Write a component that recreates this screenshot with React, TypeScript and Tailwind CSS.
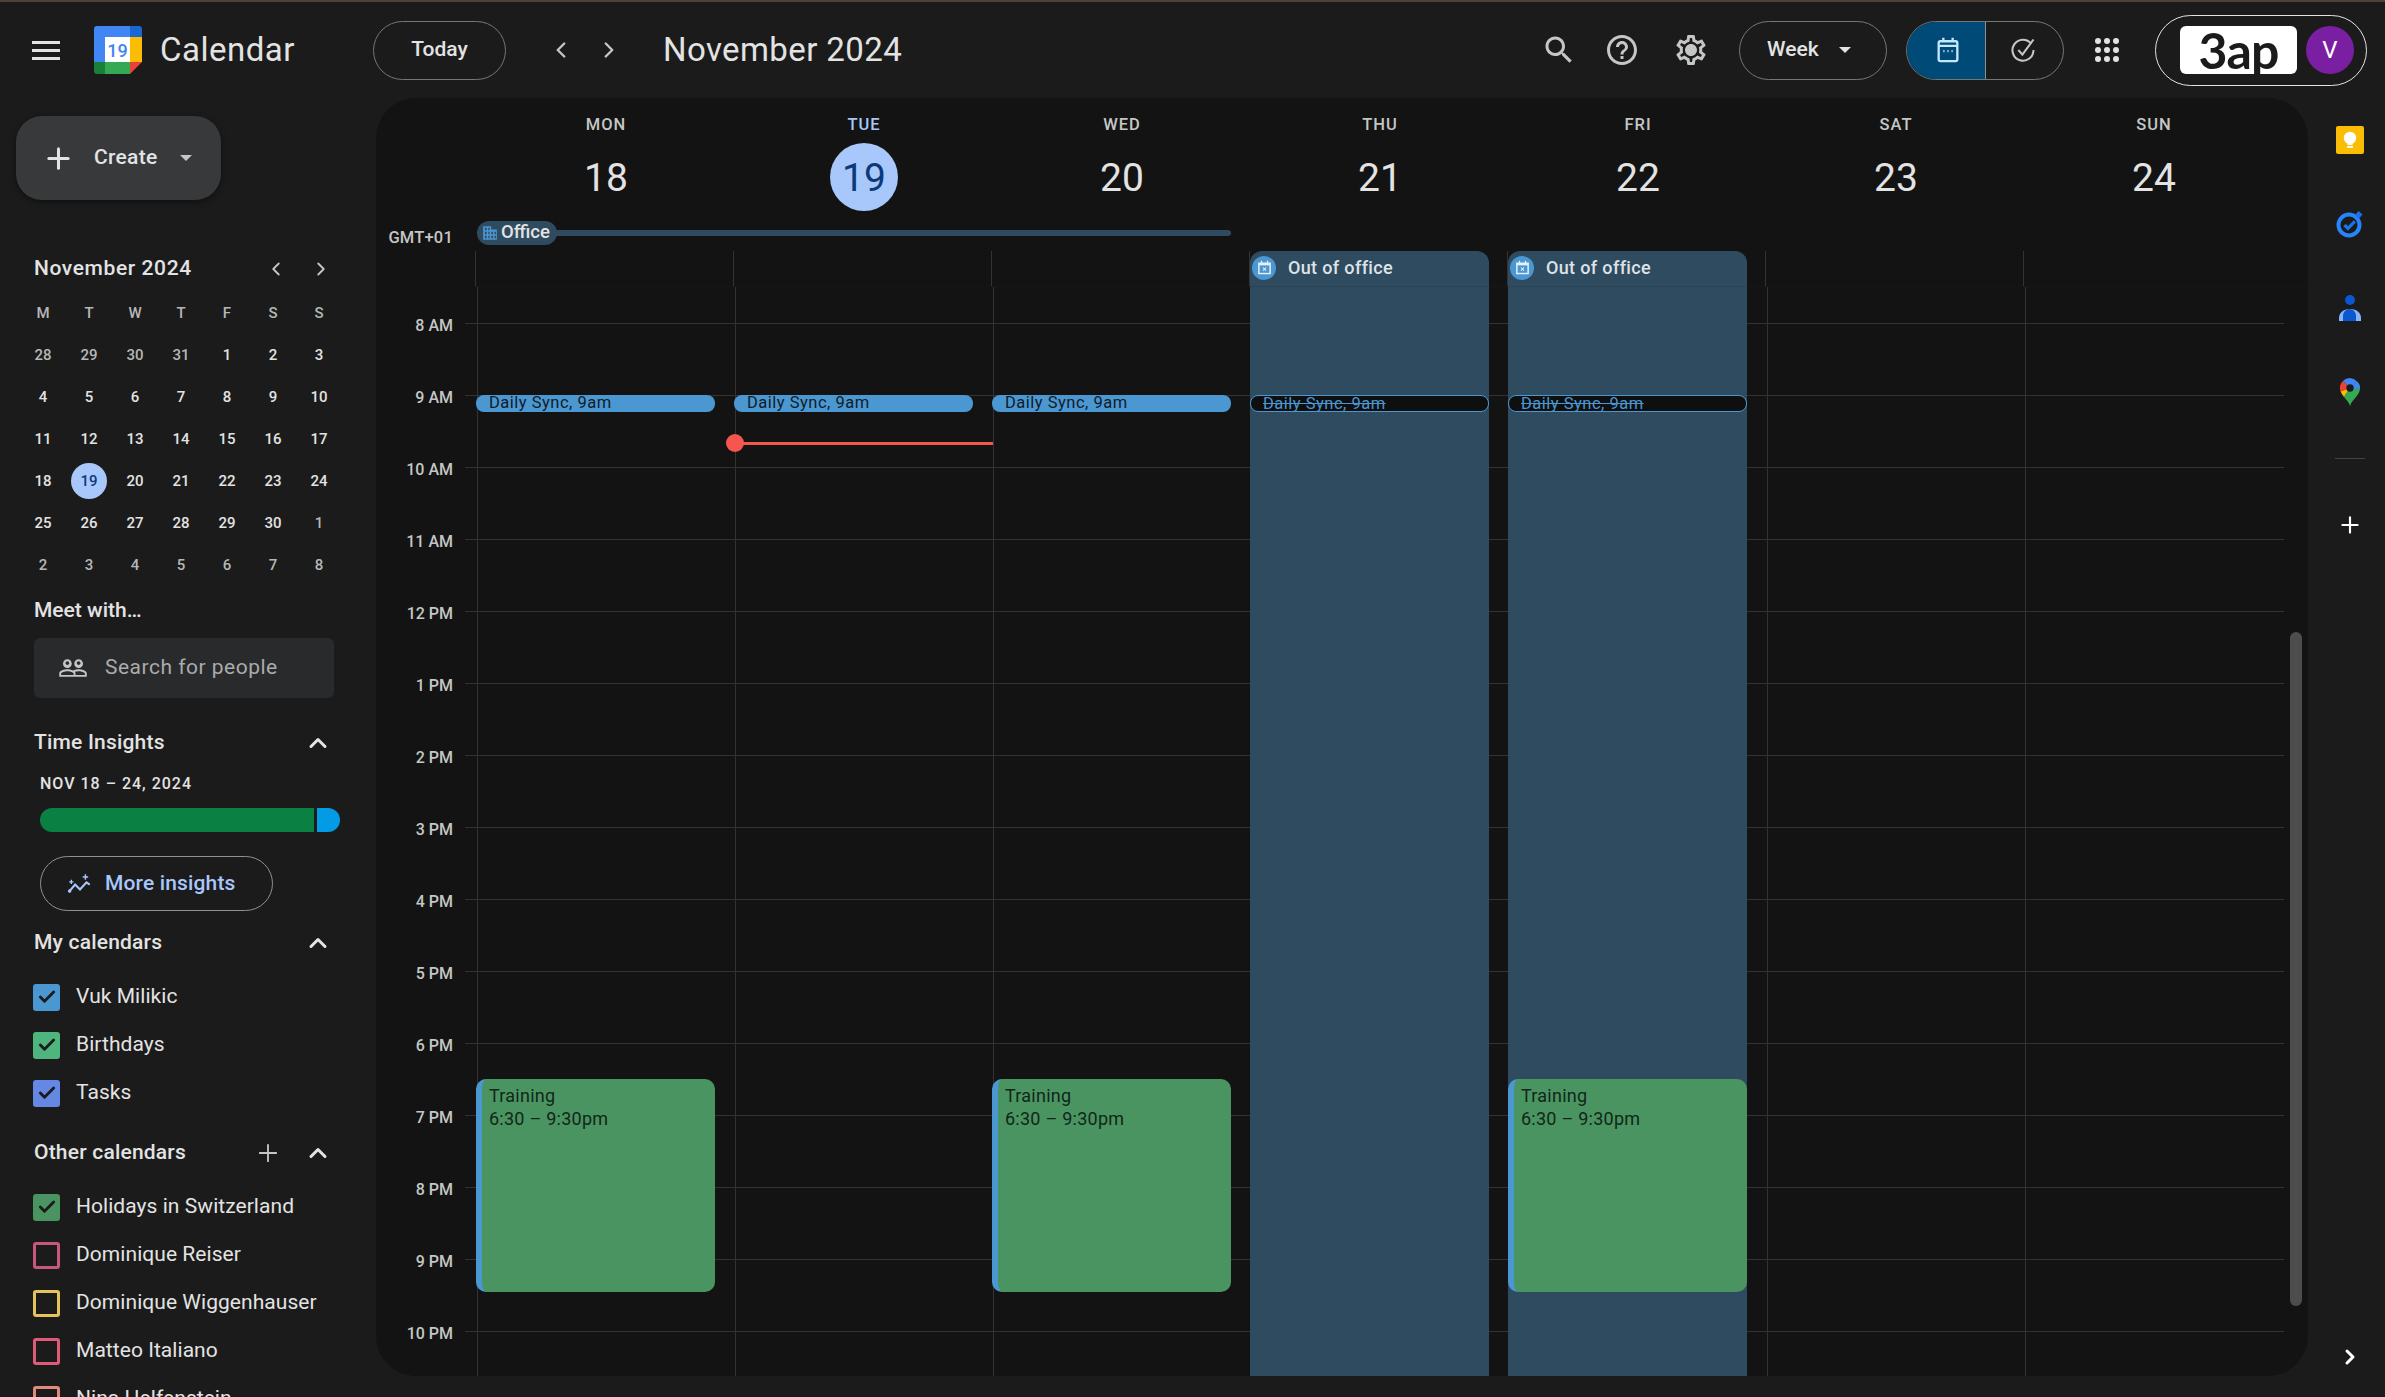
import { Check, ChevronLeft, ChevronRight, ChevronUp, Plus } from 'lucide-react'

// ============================================
// DATA
// ============================================

const weekDays = [
  { label: 'MON', date: '18' },
  { label: 'TUE', date: '19', today: true },
  { label: 'WED', date: '20' },
  { label: 'THU', date: '21' },
  { label: 'FRI', date: '22' },
  { label: 'SAT', date: '23' },
  { label: 'SUN', date: '24' },
]

const hours = ['8 AM', '9 AM', '10 AM', '11 AM', '12 PM', '1 PM', '2 PM', '3 PM', '4 PM', '5 PM', '6 PM', '7 PM', '8 PM', '9 PM', '10 PM']

const miniDays = [
  ['28', '29', '30', '31', '1', '2', '3'],
  ['4', '5', '6', '7', '8', '9', '10'],
  ['11', '12', '13', '14', '15', '16', '17'],
  ['18', '19', '20', '21', '22', '23', '24'],
  ['25', '26', '27', '28', '29', '30', '1'],
  ['2', '3', '4', '5', '6', '7', '8'],
]

const myCalendars = [
  { name: 'Vuk Milikic', box: 'bg-[#4b97d2] border-[#4b97d2]', checked: true },
  { name: 'Birthdays', box: 'bg-[#4fb57f] border-[#4fb57f]', checked: true },
  { name: 'Tasks', box: 'bg-[#6488e4] border-[#6488e4]', checked: true },
]

const otherCalendars = [
  { name: 'Holidays in Switzerland', box: 'bg-[#4a9461] border-[#4a9461]', checked: true },
  { name: 'Dominique Reiser', box: 'border-[#c9567f]', checked: false },
  { name: 'Dominique Wiggenhauser', box: 'border-[#e4c25c]', checked: false },
  { name: 'Matteo Italiano', box: 'border-[#e05a77]', checked: false },
  { name: 'Nina Helfenstein', box: 'border-[#e08a7c]', checked: false },
]

// ============================================
// ICONS
// ============================================

function MaterialIcon({ d, className }: { d: string; className?: string }) {
  return (
    <svg viewBox="0 0 24 24" fill="currentColor" className={className}>
      <path d={d} />
    </svg>
  )
}

const searchPath = 'M15.5 14h-.79l-.28-.27C15.41 12.59 16 11.11 16 9.5 16 5.91 13.09 3 9.5 3S3 5.91 3 9.5 5.91 16 9.5 16c1.61 0 3.09-.59 4.23-1.57l.27.28v.79l5 4.99L20.49 19l-4.99-5zm-6 0C7.01 14 5 11.99 5 9.5S7.01 5 9.5 5 14 7.01 14 9.5 11.99 14 9.5 14z'
const helpPath = 'M11 18h2v-2h-2v2zm1-16C6.48 2 2 6.48 2 12s4.48 10 10 10 10-4.48 10-10S17.52 2 12 2zm0 18c-4.41 0-8-3.59-8-8s3.59-8 8-8 8 3.59 8 8-3.59 8-8 8zm0-14c-2.21 0-4 1.79-4 4h2c0-1.1.9-2 2-2s2 .9 2 2c0 2-3 1.75-3 5h2c0-2.25 3-2.5 3-5 0-2.21-1.79-4-4-4z'
const gearPath = 'M19.43 12.98c.04-.32.07-.64.07-.98 0-.34-.03-.66-.07-.98l2.11-1.65c.19-.15.24-.42.12-.64l-2-3.46c-.09-.16-.26-.25-.44-.25-.06 0-.12.01-.17.03l-2.49 1c-.52-.4-1.08-.73-1.69-.98l-.38-2.65C14.46 2.18 14.25 2 14 2h-4c-.25 0-.46.18-.49.42l-.38 2.65c-.61.25-1.17.59-1.69.98l-2.49-1c-.06-.02-.12-.03-.18-.03-.17 0-.34.09-.43.25l-2 3.46c-.13.22-.07.49.12.64l2.11 1.65c-.04.32-.07.65-.07.98 0 .33.03.66.07.98l-2.11 1.65c-.19.15-.24.42-.12.64l2 3.46c.09.16.26.25.44.25.06 0 .12-.01.17-.03l2.49-1c.52.4 1.08.73 1.69.98l.38 2.65c.03.24.24.42.49.42h4c.25 0 .46-.18.49-.42l.38-2.65c.61-.25 1.17-.59 1.69-.98l2.49 1c.06.02.12.03.18.03.17 0 .34-.09.43-.25l2-3.46c.12-.22.07-.49-.12-.64l-2.11-1.65zm-1.98-1.71c.04.31.05.52.05.73 0 .21-.02.43-.05.73l-.14 1.13.89.7 1.08.84-.7 1.21-1.27-.51-1.04-.42-.9.68c-.43.32-.84.56-1.25.73l-1.06.43-.16 1.13-.2 1.35h-1.4l-.19-1.35-.16-1.13-1.06-.43c-.43-.18-.83-.41-1.23-.71l-.91-.7-1.06.43-1.27.51-.7-1.21 1.08-.84.89-.7-.14-1.13c-.03-.31-.05-.54-.05-.74s.02-.43.05-.73l.14-1.13-.89-.7-1.08-.84.7-1.21 1.27.51 1.04.42.9-.68c.43-.32.84-.56 1.25-.73l1.06-.43.16-1.13.2-1.35h1.39l.19 1.35.16 1.13 1.06.43c.43.18.83.41 1.23.71l.91.7 1.06-.43 1.27-.51.7 1.21-1.07.85-.89.7.14 1.13zM12 8c-2.21 0-4 1.79-4 4s1.79 4 4 4 4-1.79 4-4-1.79-4-4-4z'
const peoplePath = 'M16.5 13c-1.2 0-3.07.34-4.5 1-1.43-.67-3.3-1-4.5-1C5.33 13 1 14.08 1 16.25V19h22v-2.75c0-2.17-4.33-3.25-6.5-3.25zm-4 4.5h-10v-1.25c0-.54 2.56-1.75 5-1.75s5 1.21 5 1.75v1.25zm9 0H14v-1.25c0-.46-.2-.86-.52-1.22.88-.3 1.96-.53 3.02-.53 2.44 0 5 1.21 5 1.75v1.25zM7.5 12c1.93 0 3.5-1.57 3.5-3.5S9.43 5 7.5 5 4 6.57 4 8.5 5.57 12 7.5 12zm0-5.5c.83 0 1.5.67 1.5 1.5s-.67 1.5-1.5 1.5S6 8.83 6 8s.67-1.5 1.5-1.5zm9 5.5c1.93 0 3.5-1.57 3.5-3.5S18.43 5 16.5 5 13 6.57 13 8.5s1.57 3.5 3.5 3.5zm0-5.5c.83 0 1.5.67 1.5 1.5s-.67 1.5-1.5 1.5S15 8.83 15 8s.67-1.5 1.5-1.5z'

function CalendarLogo() {
  return (
    <svg viewBox="0 0 48 48" className="w-[48px] h-[48px] shrink-0">
      <path d="M3 0h33v11H11v25H0V3a3 3 0 0 1 3-3z" fill="#4285f4" />
      <path d="M36 0h9a3 3 0 0 1 3 3v8H36z" fill="#1967d2" />
      <rect x="11" y="11" width="25" height="25" fill="#fff" />
      <rect x="36" y="11" width="12" height="25" fill="#fbbc04" />
      <rect x="11" y="36" width="25" height="12" fill="#34a853" />
      <path d="M0 36h11v12H3a3 3 0 0 1-3-3z" fill="#188038" />
      <path d="M36 36h12L36 48z" fill="#ea4335" />
      <text x="23.5" y="31" textAnchor="middle" fontSize="18" fontFamily="Roboto, sans-serif" fontWeight="500" fill="#4285f4">19</text>
    </svg>
  )
}

function OfficeIcon({ className }: { className?: string }) {
  return (
    <svg viewBox="0 0 14 14" className={className} fill="#4b97d2">
      <path d="M1 1h7v3h5v9H1zm1.500 1.500v2h1.600v-2zm3 0v2h1.200v-2zm-3 3.500v2h1.600V6zm3 0v2h1.200V6zm2.700 0v2h1.500V6zm2.800 0v2h1.300V6zm-8.500 3.500v2h1.600v-2zm3 0v2h1.200v-2zm2.700 0v2h1.500v-2zm2.800 0v2h1.300v-2z" fillRule="evenodd" />
    </svg>
  )
}

function OutOfOfficeBadge() {
  return (
    <span className="flex items-center justify-center w-[24px] h-[24px] rounded-full bg-[#4b97d2] shrink-0">
      <svg viewBox="0 0 16 16" className="w-[17px] h-[17px]">
        <path d="M2 3.200h2.600V1.600h1.200v1.600h4.400V1.600h1.200v1.600H14v11.200H2z" fill="#e6f0f8" />
        <rect x="3.400" y="6" width="9.200" height="7" fill="#4b97d2" />
        <path d="M6.600 8l2.800 3M9.400 8l-2.800 3" stroke="#e6f0f8" strokeWidth="1" />
      </svg>
    </span>
  )
}

function KeepIcon() {
  return (
    <svg viewBox="0 0 28 28" className="w-[28px] h-[28px]">
      <rect width="28" height="28" rx="2" fill="#fbbc04" />
      <circle cx="14" cy="12" r="6.200" fill="#fff" />
      <rect x="11.500" y="16" width="5" height="3" fill="#fff" />
      <rect x="11" y="20" width="6" height="1.800" fill="#fff" />
    </svg>
  )
}

function TasksIcon() {
  return (
    <svg viewBox="0 0 28 28" className="w-[28px] h-[28px]">
      <circle cx="13" cy="15" r="10.500" fill="none" stroke="#2684fc" strokeWidth="4" />
      <path d="M8.500 15l3.400 3.400 7-7" fill="none" stroke="#1a73e8" strokeWidth="3.200" />
      <path d="M22.500 1l4 3.500-3.500 4-4-3.500z" fill="#1a73e8" />
    </svg>
  )
}

function ContactsIcon() {
  return (
    <svg viewBox="0 0 24 28" className="w-[24px] h-[28px]">
      <circle cx="12" cy="6" r="5" fill="#0b57d0" />
      <path d="M1 27v-3c0-5 4-9 11-9s11 4 11 9v3z" fill="#8ab4f8" />
      <path d="M5 27v-5c0-4 3-7 6.500-7s6.500 3 6.500 7v5z" fill="#0b57d0" />
    </svg>
  )
}

function MapsIcon() {
  return (
    <svg viewBox="0 0 20 28" className="w-[20px] h-[28px]">
      <path d="M10 0a10 10 0 0 0-7.200 3l7.200 7 7-6.500A10 10 0 0 0 10 0z" fill="#4285f4" />
      <path d="M2.800 3A10 10 0 0 0 .6 13.500L10 10z" fill="#ea4335" />
      <path d="M.6 13.500c.8 2 2 3.800 3.400 5.500L10 10z" fill="#fbbc04" />
      <path d="M17 3.500L10 10 4 19c2.500 3 5 5.500 6 9 1-3.500 3.500-6 6-9 2-2.500 4-5 4-9 0-2.500-1-4.700-3-6.500z" fill="#34a853" />
      <path d="M17 3.500L10 10l6.500 1.500 3.500-2c-.200-2.300-1.300-4.300-3-6z" fill="#4285f4" />
      <circle cx="10" cy="10" r="3.700" fill="#1b1b1b" />
    </svg>
  )
}

function Caret({ className }: { className?: string }) {
  return <span className={`w-0 h-0 border-x-[6px] border-x-transparent border-t-[6px] ${className ?? ''}`} />
}

// ============================================
// SIDEBAR
// ============================================

function CalendarRow({ name, box, checked }: { name: string; box: string; checked: boolean }) {
  return (
    <div className="flex items-center h-[48px] pl-[33px]">
      <span className={`flex items-center justify-center w-[27px] h-[27px] rounded-[3px] border-[3px] shrink-0 ${box}`}>
        {checked && <Check className="w-[20px] h-[20px] text-[#1b1b1b]" strokeWidth={3.4} />}
      </span>
      <span className="ml-[16px] text-[21px] tracking-[0.05px] text-[#e3e3e3] whitespace-nowrap">{name}</span>
    </div>
  )
}

function SectionHeader({ title, withPlus }: { title: string; withPlus?: boolean }) {
  return (
    <div className="flex items-center h-[36px] pl-[34px] pr-[44px]">
      <span className="text-[21px] font-medium text-[#e3e3e3] tracking-[0.2px]">{title}</span>
      {withPlus && <Plus className="w-[28px] h-[28px] ml-auto mr-[22px] text-[#c4c7c5]" strokeWidth={1.6} />}
      <ChevronUp className={`w-[28px] h-[28px] text-[#e3e3e3] ${withPlus ? '' : 'ml-auto'}`} strokeWidth={2.6} />
    </div>
  )
}

function Sidebar() {
  return (
    <aside className="w-[376px] shrink-0 overflow-hidden">
      <button className="flex items-center mt-[18px] ml-[16px] w-[205px] h-[84px] rounded-[26px] bg-[#37393b] shadow-[0_2px_6px_rgba(0,0,0,0.45)] pl-[26px]">
        <Plus className="w-[33px] h-[33px] text-[#e3e3e3]" strokeWidth={2.2} />
        <span className="ml-[19px] text-[21px] font-medium tracking-[0.3px] text-[#e3e3e3]">Create</span>
        <Caret className="ml-[22px] border-t-[#c4c7c5]" />
      </button>

      <div className="flex items-center h-[36px] mt-[51px] pl-[34px]">
        <span className="text-[21px] font-medium tracking-[0.6px] text-[#e3e3e3]">November 2024</span>
        <ChevronLeft className="w-[22px] h-[22px] ml-auto text-[#c4c7c5]" strokeWidth={2} />
        <ChevronRight className="w-[22px] h-[22px] ml-[23px] mr-[44px] text-[#c4c7c5]" strokeWidth={2} />
      </div>

      <div className="grid grid-cols-[repeat(7,46px)] auto-rows-[42px] mt-[5px] ml-[20px] text-[15px] font-medium text-center">
        {['M', 'T', 'W', 'T', 'F', 'S', 'S'].map((d, i) => (
          <span key={i} className="flex items-center justify-center text-[#b5b8b6]">{d}</span>
        ))}
        {miniDays.flatMap((week, r) =>
          week.map((d, c) => {
            const muted = r === 0 ? c < 4 : r >= 4 && (r === 5 || c === 6)
            const today = d === '19'
            return (
              <span key={`${r}-${c}`} className="flex items-center justify-center">
                <span className={`flex items-center justify-center w-[36px] h-[36px] rounded-full ${today ? 'bg-[#a8c7fa] text-[#0b3a7a]' : muted ? 'text-[#b5b8b6]' : 'text-[#e3e3e3]'}`}>
                  {d}
                </span>
              </span>
            )
          })
        )}
      </div>

      <div className="h-[24px] mt-[13px] ml-[34px] flex items-center text-[21px] font-medium text-[#e3e3e3]">Meet with…</div>
      <div className="flex items-center mt-[15px] ml-[34px] w-[300px] h-[60px] rounded-[6px] bg-[#292a2c] pl-[24px]">
        <MaterialIcon d={peoplePath} className="w-[30px] h-[30px] text-[#c4c7c5]" />
        <span className="ml-[17px] text-[21px] text-[#a9acaa] tracking-[0.5px]">Search for people</span>
      </div>

      <div className="mt-[27px]">
        <SectionHeader title="Time Insights" />
      </div>
      <div className="flex items-center h-[20px] mt-[13px] ml-[40px] text-[16px] font-medium tracking-[1px] text-[#e3e3e3]">NOV 18 – 24, 2024</div>
      <div className="flex mt-[14px] ml-[40px] w-[300px] h-[24px] rounded-[12px] overflow-hidden">
        <div className="w-[274px] bg-[#0b8043]" />
        <div className="w-[3px]" />
        <div className="flex-1 bg-[#039be5]" />
      </div>
      <button className="flex items-center mt-[24px] ml-[40px] w-[233px] h-[55px] rounded-full border border-[#8e918f] pl-[26px]">
        <svg viewBox="0 0 24 24" className="w-[26px] h-[26px] text-[#a8c7fa]" fill="none" stroke="currentColor" strokeWidth="2">
          <path d="M1.500 19.500l6-7 4.500 4.500 6-6.500 3 2" />
          <circle cx="2.500" cy="18.500" r="1.600" fill="currentColor" stroke="none" />
          <path d="M4 8v4M2 10h4M17 3v5M14.500 5.500h5" strokeWidth="1.300" />
        </svg>
        <span className="ml-[12px] text-[21px] font-medium tracking-[0.15px] text-[#a8c7fa]">More insights</span>
      </button>

      <div className="mt-[14px]">
        <SectionHeader title="My calendars" />
      </div>
      <div className="mt-[12px]">
        {myCalendars.map((c) => <CalendarRow key={c.name} {...c} />)}
      </div>

      <div className="mt-[18px]">
        <SectionHeader title="Other calendars" withPlus />
      </div>
      <div className="mt-[12px]">
        {otherCalendars.map((c) => <CalendarRow key={c.name} {...c} />)}
      </div>
    </aside>
  )
}

// ============================================
// WEEK GRID
// ============================================

function DailySync({ declined }: { declined?: boolean }) {
  return (
    <div className={`absolute top-[108px] -left-[2px] w-[239px] h-[17px] rounded-[8px] pl-[12px] text-[16.5px] leading-[16px] tracking-[0.5px] whitespace-nowrap ${declined ? 'bg-[#0f0f10] border border-[#4b97d2] text-[#4b97d2] line-through' : 'bg-[#4b97d2] text-[#0f1c27] pl-[13px]'}`}>
      Daily Sync, 9am
    </div>
  )
}

function Training() {
  return (
    <div className="absolute top-[792px] -left-[2px] w-[239px] h-[213px] rounded-[10px] border-l-[6px] border-[#4b97d2] bg-[#4a9461] pl-[7px] pt-[5px] text-[18px] leading-[23px] tracking-[0.25px] text-[#12261a]">
      <div>Training</div>
      <div>6:30 – 9:30pm</div>
    </div>
  )
}

function OutOfOffice() {
  return (
    <div className="absolute -top-[36px] bottom-0 -left-[2px] w-[239px] rounded-t-[12px] bg-[#2f4b60]">
      <div className="flex items-center h-[36px] pl-[2px] pb-[2px] border-b border-[#2a4355]">
        <OutOfOfficeBadge />
        <span className="ml-[12px] text-[18px] font-medium tracking-[0.35px] text-[#dfe3e6]">Out of office</span>
      </div>
    </div>
  )
}

function WeekGrid() {
  return (
    <main className="relative flex flex-col w-[1932px] h-[1278px] rounded-[40px] bg-[#131313] overflow-hidden shrink-0">
      {/* day headings */}
      <div className="flex h-[123px] pl-[101px] shrink-0">
        {weekDays.map((d) => (
          <div key={d.label} className="flex flex-col items-center w-[258px] pt-[15px]">
            <span className={`h-[24px] leading-[24px] text-[16.5px] font-medium tracking-[1px] ${d.today ? 'text-[#a8c7fa]' : 'text-[#c4c7c5]'}`}>{d.label}</span>
            <span className={`flex items-center justify-center w-[68px] h-[68px] mt-[6px] pt-[2px] rounded-full text-[39px] ${d.today ? 'bg-[#a8c7fa] text-[#0b3a7a]' : 'text-[#e3e3e3]'}`}>{d.date}</span>
          </div>
        ))}
      </div>

      {/* all-day row */}
      <div className="flex h-[66px] shrink-0">
        <span className="w-[77px] mt-[6px] h-[22px] leading-[22px] text-right text-[16.5px] tracking-[0.2px] font-medium text-[#c4c7c5] whitespace-nowrap">GMT+01</span>
        <div className="relative flex-1 ml-[22px] border-b border-[#171717]">
          <div className="absolute top-[30px] bottom-0 left-0 grid grid-cols-[repeat(7,258px)]">
            {weekDays.map((d) => <div key={d.label} className="border-l border-[#333]" />)}
          </div>
          <div className="absolute top-[9px] left-[2px] w-[754px] h-[6px] rounded-[3px] bg-[#2f4b60]" />
          <div className="absolute top-0 left-[2px] flex items-center w-[80px] h-[24px] rounded-[12px] bg-[#2f4b60] pl-[5px]">
            <OfficeIcon className="w-[16px] h-[16px]" />
            <span className="ml-[3px] text-[18.5px] font-medium text-[#e3e3e3]">Office</span>
          </div>
        </div>
      </div>

      {/* hours */}
      <div className="flex flex-1 min-h-0">
        <div className="w-[77px] pt-[36px] shrink-0">
          {hours.map((h) => (
            <div key={h} className="h-[72px] text-right text-[16px] leading-[20px] font-medium text-[#c4c7c5] -translate-y-[7px] whitespace-nowrap">{h}</div>
          ))}
        </div>
        <div className="relative ml-[12px] w-[1819px]">
          <div className="h-[36px]" />
          {hours.map((h) => <div key={h} className="h-[72px] border-t border-[#333]" />)}

          <div className="absolute inset-y-0 left-[12px] grid grid-cols-[repeat(7,258px)]">
            <div className="relative border-l border-[#333]">
              <DailySync />
              <Training />
            </div>
            <div className="relative border-l border-[#333]">
              <DailySync />
              <div className="absolute top-[155px] -left-px w-[258px] h-[3px] bg-[#f7564f]" />
              <div className="absolute top-[147px] -left-[10px] w-[18px] h-[18px] rounded-full bg-[#f7564f]" />
            </div>
            <div className="relative border-l border-[#333]">
              <DailySync />
              <Training />
            </div>
            <div className="relative border-l border-[#333]">
              <OutOfOffice />
              <DailySync declined />
            </div>
            <div className="relative border-l border-[#333]">
              <OutOfOffice />
              <DailySync declined />
              <Training />
            </div>
            <div className="relative border-l border-[#333]" />
            <div className="relative border-l border-[#333]" />
          </div>
        </div>
      </div>

      {/* scrollbar */}
      <div className="absolute top-[534px] left-[1914px] w-[12px] h-[674px] rounded-[6px] bg-[#4d4d4d]" />
    </main>
  )
}

// ============================================
// APP
// ============================================

export default function App() {
  return (
    <div className="flex flex-col w-[2385px] h-[1397px] overflow-hidden bg-[#1b1b1b] border-t-2 border-[#4f423c] font-[Roboto,sans-serif] text-[#e3e3e3]">
      <header className="flex items-center h-[96px] shrink-0">
        <div className="flex items-center w-[373px] shrink-0">
          <div className="flex flex-col gap-[5px] ml-[32px] w-[28px]">
            <span className="h-[3px] bg-[#e3e3e3]" />
            <span className="h-[3px] bg-[#e3e3e3]" />
            <span className="h-[3px] bg-[#e3e3e3]" />
          </div>
          <div className="ml-[34px]"><CalendarLogo /></div>
          <span className="ml-[18px] text-[33px] tracking-[0.5px] text-[#e3e3e3]">Calendar</span>
        </div>
        <button className="w-[133px] h-[59px] rounded-full border border-[#747775] text-[21px] font-medium text-[#e3e3e3]">Today</button>
        <ChevronLeft className="ml-[42px] w-[26px] h-[26px] text-[#c4c7c5]" strokeWidth={2.2} />
        <ChevronRight className="ml-[22px] w-[26px] h-[26px] text-[#c4c7c5]" strokeWidth={2.2} />
        <span className="ml-[41px] text-[33px] tracking-[0.4px] text-[#e3e3e3]">November 2024</span>

        <div className="flex items-center ml-auto mr-[18px]">
          <MaterialIcon d={searchPath} className="w-[36px] h-[36px] text-[#c4c7c5]" />
          <MaterialIcon d={helpPath} className="ml-[27px] w-[36px] h-[36px] text-[#c4c7c5]" />
          <MaterialIcon d={gearPath} className="ml-[33px] w-[36px] h-[36px] text-[#c4c7c5]" />
          <button className="flex items-center ml-[30px] w-[148px] h-[59px] rounded-full border border-[#747775] pl-[27px]">
            <span className="text-[21px] font-medium text-[#e3e3e3]">Week</span>
            <Caret className="ml-[20px] border-t-[#e3e3e3]" />
          </button>
          <div className="flex ml-[19px] w-[158px] h-[59px] rounded-full border border-[#747775] overflow-hidden">
            <div className="flex items-center justify-center w-[79px] pl-[3px] bg-[#004a77] border-r border-[#8e918f]">
              <svg viewBox="0 0 24 24" className="w-[28px] h-[28px] text-[#c2e7ff]" fill="none" stroke="currentColor" strokeWidth="2">
                <rect x="4" y="4.500" width="16" height="17" rx="1.500" />
                <path d="M4 8.500h16M8 1.500v3M16 1.500v3" />
                <path d="M8 13h1M11.500 13h1M15 13h1" />
              </svg>
            </div>
            <div className="flex items-center justify-center flex-1 pr-[4px]">
              <svg viewBox="0 0 24 24" className="w-[28px] h-[28px] text-[#c4c7c5]" fill="none" stroke="currentColor" strokeWidth="1.800">
                <path d="M19 6.500a9 9 0 1 0 2 5.500" />
                <path d="M8 12l3.500 4L21 3" />
              </svg>
            </div>
          </div>
          <svg viewBox="0 0 24 24" className="ml-[31px] w-[24px] h-[24px] text-[#e3e3e3]" fill="currentColor">
            <circle cx="3" cy="3" r="3" /><circle cx="12" cy="3" r="3" /><circle cx="21" cy="3" r="3" />
            <circle cx="3" cy="12" r="3" /><circle cx="12" cy="12" r="3" /><circle cx="21" cy="12" r="3" />
            <circle cx="3" cy="21" r="3" /><circle cx="12" cy="21" r="3" /><circle cx="21" cy="21" r="3" />
          </svg>
          <div className="flex items-center ml-[36px] w-[212px] h-[71px] rounded-full border border-[#e3e3e3] pl-[24px]">
            <span className="flex items-center justify-center w-[117px] h-[48px] rounded-[6px] bg-white text-[50px] leading-none tracking-[-1px] font-bold text-[#1b1b1b] font-[Lato,sans-serif]">3ap</span>
            <span className="flex items-center justify-center ml-[9px] w-[48px] h-[48px] rounded-full bg-[#7b1fa2] text-[24px] text-white">V</span>
          </div>
        </div>
      </header>

      <div className="flex flex-1 min-h-0">
        <Sidebar />
        <WeekGrid />
        <div className="flex flex-col items-center flex-1 pl-[7px]">
          <div className="flex items-center justify-center h-[84px]"><KeepIcon /></div>
          <div className="flex items-center justify-center h-[84px]"><TasksIcon /></div>
          <div className="flex items-center justify-center h-[84px]"><ContactsIcon /></div>
          <div className="flex items-center justify-center h-[84px]"><MapsIcon /></div>
          <div className="mt-[24px] w-[30px] h-px bg-[#444]" />
          <div className="flex items-center justify-center mt-[42px] h-[48px]">
            <Plus className="w-[26px] h-[26px] text-white" strokeWidth={2} />
          </div>
          <div className="flex items-center justify-center mt-auto mb-[16px] h-[48px]">
            <ChevronRight className="w-[24px] h-[24px] text-white" strokeWidth={3} />
          </div>
        </div>
      </div>
    </div>
  )
}
